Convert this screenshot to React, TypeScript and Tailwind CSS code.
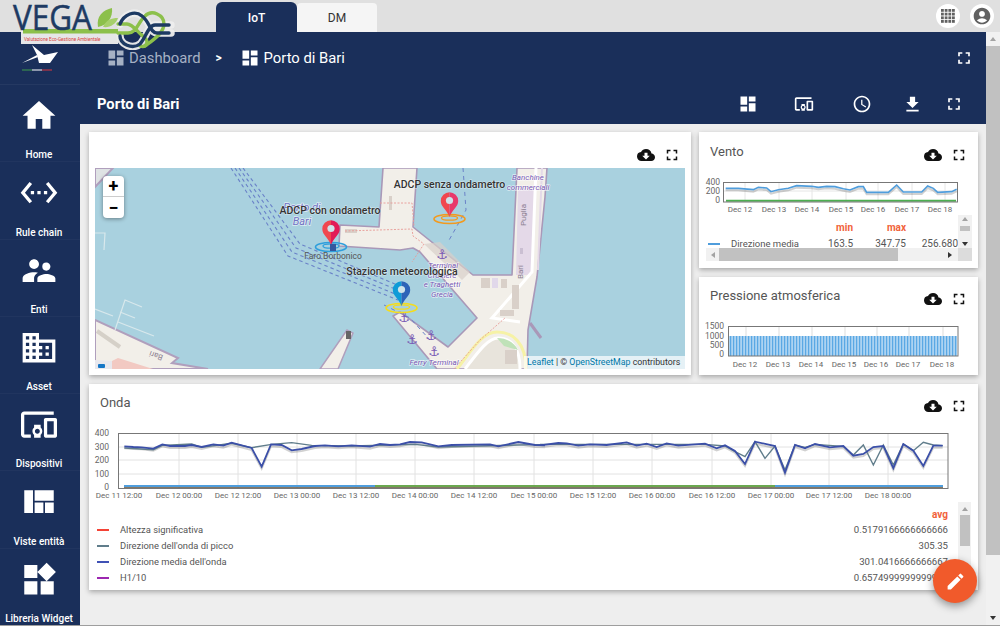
import { ReactNode } from 'react';
import {
  MdAccessTime,
  MdAccountCircle,
  MdCloudDownload,
  MdDashboard,
  MdDevicesOther,
  MdDomain,
  MdEdit,
  MdFileDownload,
  MdFullscreen,
  MdHome,
  MdSettingsEthernet,
  MdSupervisorAccount,
  MdViewQuilt,
  MdWidgets,
} from 'react-icons/md';

type Pt = [number, number];

// points read off 3x crops, so convert them back to page coordinates
const pts = (list: Pt[], ox: number, oy: number) =>
  list.map(([x, y]) => `${x / 3 + ox},${y / 3 + oy}`).join(' ');

const navItems = [
  { label: 'Home', icon: MdHome },
  { label: 'Rule chain', icon: MdSettingsEthernet },
  { label: 'Enti', icon: MdSupervisorAccount },
  { label: 'Asset', icon: MdDomain },
  { label: 'Dispositivi', icon: MdDevicesOther },
  { label: 'Viste entità', icon: MdViewQuilt },
  { label: 'Libreria Widget', icon: MdWidgets },
];

const ventoLine: Pt[] = [
  [92, 175], [130, 175], [175, 179], [190, 172], [215, 174], [228, 185], [250, 179], [280, 175], [305, 167],
  [350, 169], [370, 172], [395, 169], [420, 170], [445, 176], [465, 180], [490, 170], [505, 170], [515, 187],
  [580, 187], [605, 165], [625, 186], [680, 186], [698, 168], [715, 175], [728, 187], [770, 185], [785, 178],
];

const ondaLeft: Pt[] = [
  [118, 184], [145, 186], [170, 187], [205, 191], [232, 178], [255, 183], [300, 183], [320, 180], [350, 186],
  [385, 178], [415, 182], [440, 173], [500, 189], [530, 245], [558, 178], [590, 180], [620, 196], [650, 192],
  [690, 183], [720, 181], [760, 184], [800, 181], [855, 185], [885, 177], [915, 180], [945, 178], [975, 171],
  [1010, 172], [1060, 184], [1100, 180], [1215, 178], [1240, 184], [1300, 171], [1350, 180], [1380, 181],
];
const ondaRight: Pt[] = [
  [0, 181], [55, 174], [80, 175], [115, 182], [150, 178], [200, 180], [260, 172], [290, 182], [320, 176],
  [350, 186], [380, 175], [415, 182], [495, 176], [530, 190], [555, 181], [585, 198], [615, 237], [645, 170],
  [705, 183], [735, 263], [765, 180], [795, 190], [825, 177], [870, 187], [910, 183], [940, 212], [970, 207],
  [1000, 186], [1030, 183], [1060, 250], [1090, 177], [1120, 197], [1150, 243], [1180, 182], [1208, 182],
];
const peakLeft: Pt[] = [
  [118, 189], [205, 194], [232, 181], [320, 177], [350, 187], [440, 175], [500, 188], [560, 178], [620, 173],
  [680, 181], [800, 183], [991, 178], [1060, 186], [1380, 178],
];
const peakRight: Pt[] = [
  [0, 178], [495, 178], [555, 183], [585, 200], [615, 215], [645, 170], [675, 220], [705, 183], [735, 255],
  [765, 180], [795, 187], [825, 178], [910, 184], [940, 210], [970, 180], [1000, 240], [1030, 180], [1060, 240],
  [1090, 177], [1120, 197], [1150, 172], [1180, 180], [1208, 182],
];

const ondaTicks: [number, string][] = [
  [119, 'Dec 11 12:00'], [179, 'Dec 12 00:00'], [238, 'Dec 12 12:00'], [297, 'Dec 13 00:00'],
  [356, 'Dec 13 12:00'], [415, 'Dec 14 00:00'], [474, 'Dec 14 12:00'], [534, 'Dec 15 00:00'],
  [593, 'Dec 15 12:00'], [652, 'Dec 16 00:00'], [712, 'Dec 16 12:00'], [771, 'Dec 17 00:00'],
  [829, 'Dec 17 12:00'], [888, 'Dec 18 00:00'],
];

const ondaRows = [
  { name: 'Altezza significativa', color: '#f44336', avg: '0.5179166666666666' },
  { name: "Direzione dell'onda di picco", color: '#607d8b', avg: '305.35' },
  { name: "Direzione media dell'onda", color: '#3f51b5', avg: '301.0416666666667' },
  { name: 'H1/10', color: '#9c27b0', avg: '0.6574999999999999' },
];

function Arrow({ dir, dark }: { dir: 'up' | 'down' | 'left' | 'right'; dark?: boolean }) {
  const shape = {
    up: '1,6 4,2 7,6',
    down: '1,2 4,6 7,2',
    left: '6,1 2,4 6,7',
    right: '2,1 6,4 2,7',
  }[dir];
  return (
    <svg viewBox="0 0 8 8" className="w-2 h-2">
      <polygon points={shape} fill={dark ? '#333333' : '#a3a3a3'} />
    </svg>
  );
}

function CardActions() {
  return (
    <div className="flex gap-2 mr-[10px]">
      <MdCloudDownload className="w-[18px] h-[18px] text-[#111111]" />
      <MdFullscreen className="w-[18px] h-[18px] text-[#111111]" />
    </div>
  );
}

function Card({ title, className, children, first }: { title?: string; className?: string; children: ReactNode; first?: boolean }) {
  return (
    <div className={`bg-white shadow-[0_2px_5px_rgba(0,0,0,0.3)] flex flex-col overflow-hidden ${className ?? ''}`}>
      <div className={`flex justify-between ${first ? 'pt-[14px]' : 'pt-[13px]'}`}>
        <div className="ml-[11px] -mt-[4px] text-[13px] leading-[20px] text-[#555555]">{title}</div>
        <CardActions />
      </div>
      {children}
    </div>
  );
}

function Pin({ x, y, a, b, ring }: { x: number; y: number; a: string; b: string; ring: string }) {
  // x,y is the tip of the pin
  return (
    <g>
      <ellipse cx={x} cy={y + 2} rx={15.5} ry={4.5} fill="none" stroke={ring} strokeWidth={1.6} />
      <ellipse cx={x} cy={y + 1} rx={8} ry={2.2} fill="none" stroke={ring} strokeWidth={1.3} />
      <path d={`M${x} ${y} C${x - 3} ${y - 8} ${x - 8.7} ${y - 10} ${x - 8.7} ${y - 16} A8.7 8.7 0 0 1 ${x} ${y - 24.7} Z`} fill={a} />
      <path d={`M${x} ${y} C${x + 3} ${y - 8} ${x + 8.7} ${y - 10} ${x + 8.7} ${y - 16} A8.7 8.7 0 0 0 ${x} ${y - 24.7} Z`} fill={b} />
      <circle cx={x} cy={y - 16.5} r={3.6} fill="#cfe3ea" />
    </g>
  );
}

function MapDrawing() {
  const anchors: Pt[] = [[442, 254], [404, 317], [412, 339], [431, 335], [434, 351]];
  const label = 'font-medium fill-[#333333] [paint-order:stroke] stroke-white/50 stroke-[1px]';
  const place = 'italic fill-[#7a5bb5] [paint-order:stroke] stroke-white/60 stroke-[1.5px]';
  return (
    <svg viewBox="95 168 590 201" className="absolute inset-0 w-full h-full">
      <rect x="95" y="168" width="590" height="201" fill="#a9d1df" />
      {/* land */}
      <polygon points="95,187 113,168 95,168" fill="#dfe3e4" stroke="#b09fbd" strokeWidth="2" />
      <polygon points="95,320 178,358 172,363 208,369 95,369" fill="#f2efe9" stroke="#b09fbd" strokeWidth="2" />
      <polygon points="112,361 118,358 153,369 112,369" fill="#f2c9c2" />
      <polygon points="95,360 112,361 112,369 95,369" fill="#e8e8ee" />
      <rect x="98" y="364" width="7" height="4" rx="1" fill="#1476c6" />
      <polyline points="97,331 120,347" fill="none" stroke="#d5d0c8" strokeWidth="4" />
      <polygon points="320,369 347,330 353,333 338,369" fill="#f2efe9" stroke="#b09fbd" strokeWidth="1.5" />
      <rect x="346" y="331" width="5" height="8" fill="#666666" />
      <polygon
        points="383,168 379,227 340,225 339,246 400,250 413,248 420,252 477,318 448,347 400,312 393,316 437,369 527,369 528,330 537,277 545,197 547,168 517,168 512,275 473,275 413,227 417,168"
        fill="#f2efe9"
        stroke="#a998b8"
        strokeWidth="1.6"
        strokeLinejoin="round"
      />
      <polyline points="530,323 541,338" stroke="#a998b8" strokeWidth="3" fill="none" />
      {/* roads and lots */}
      <polygon points="518,190 535,190 532,275 516,275" fill="#e4d9e8" />
      <polyline points="536,168 532,272 492,318 520,322" fill="none" stroke="#ffffff" strokeWidth="3" />
      <polyline points="542,168 538,270" fill="none" stroke="#e4d9e8" strokeWidth="2" />
      <path d="M457 369 C472 350 482 332 497 332 C512 332 526 342 526 369" fill="none" stroke="#f6f2a6" strokeWidth="3" />
      <path d="M465 369 C478 352 488 338 498 338 C510 338 520 346 520 369" fill="#e8e4dc" stroke="#ffffff" strokeWidth="3" />
      <path d="M497 338 C506 338 514 342 518 350 L504 346 Z" fill="#bfe2b8" />
      <rect x="481" y="278" width="9" height="10" fill="#d9d0c9" />
      <rect x="492" y="278" width="6" height="10" fill="#e1d8ea" />
      <rect x="501" y="279" width="6" height="9" fill="#d9d0c9" />
      <rect x="512" y="285" width="7" height="24" fill="#d9d0c9" />
      <rect x="500" y="310" width="14" height="6" fill="#d9d0c9" />
      <polygon points="424,244 440,242 470,272 462,280" fill="#d9d0c9" opacity="0.7" />
      <rect x="345" y="229" width="12" height="4" fill="#d9d0c9" />
      <rect x="389" y="196" width="3" height="14" fill="#d9d0c9" />
      <rect x="520" y="248" width="3" height="6" fill="#cabfd2" />
      <rect x="505" y="350" width="12" height="14" fill="#d9d0c9" />
      {/* pink boundary dots */}
      <polyline points="345,231 412,229 413,236 424,244 412,262" fill="none" stroke="#e89a95" strokeWidth="0.9" strokeDasharray="2 1.5" />
      <polyline points="380,203 412,203 414,226" fill="none" stroke="#e89a95" strokeWidth="0.9" strokeDasharray="2 1.5" />
      <polyline points="454,369 480,340 505,318" fill="none" stroke="#e89a95" strokeWidth="0.9" strokeDasharray="2 1.5" />
      {/* channel marks */}
      {[0, 4, 8, 12].map((d) => (
        <polyline
          key={d}
          points={`${231 + d},168 ${288 + d},${256 - d} ${398 + d * 0.3},${300 - d * 1.1}`}
          fill="none"
          stroke="#6a82c8"
          strokeWidth="1.1"
          strokeDasharray="3.5 3"
        />
      ))}
      <polyline points="463,168 466,210 448,242" fill="none" stroke="#6a82c8" strokeWidth="1" strokeDasharray="4 4" />
      <polyline points="384,305 410,318 430,340" fill="none" stroke="#6a82c8" strokeWidth="1" strokeDasharray="4 4" />
      <g fill="none" stroke="#d8e8ec" strokeWidth="1.2">
        <polyline points="95,233 105,233 104,250" />
        <polyline points="142,307 125,300 115,330" />
        <polyline points="95,309 113,316" />
        <polyline points="120,312 135,318" />
        <polyline points="118,322 154,336" />
      </g>
      {anchors.map(([x, y]) => (
        <text key={`${x}-${y}`} x={x} y={y + 5} textAnchor="middle" className="fill-[#7a5bb5] text-[13px] font-['DejaVu_Sans']">
          ⚓
        </text>
      ))}
      {/* map names */}
      <g textAnchor="middle" className="text-[8px]">
        <text x="302" y="211" className={`${place} text-[11px] fill-[#7272c4]`}>Porto di</text>
        <text x="302" y="225" className={`${place} text-[11px] fill-[#7272c4]`}>Bari</text>
        <text x="333" y="259" className="fill-[#555555] text-[8.5px]">Faro Borbonico</text>
        <text x="528" y="180" className={place}>Banchine</text>
        <text x="528" y="190" className={place}>commerciali</text>
        <text x="523" y="215" transform="rotate(-90 523 215)" className="fill-[#8b8091] text-[8px]" dy="3">Puglia</text>
        <text x="520" y="272" transform="rotate(-90 520 272)" className="fill-[#8b8091] text-[8px]" dy="3">Bari</text>
        <text x="156" y="356" transform="rotate(200 156 356)" className="fill-[#8b8091] text-[8px]" dy="3">Bari</text>
        <text x="443" y="268" className={place}>Terminal</text>
        <text x="442" y="278" className={place}>Crociere</text>
        <text x="442" y="287" className={place}>e Traghetti</text>
        <text x="442" y="297" className={place}>Grecia</text>
        <text x="434" y="365" className={place}>Ferry Terminal</text>
      </g>
      <Pin x={331} y={245} a="#f0474f" b="#e21a57" ring="#2f9fdc" />
      <rect x="330" y="244" width="6" height="7" fill="#34589f" />
      <Pin x={449.5} y={217} a="#f0474f" b="#e8386b" ring="#f29a1f" />
      <Pin x={401.5} y={306} a="#0f9bd7" b="#2d63b8" ring="#f4dc1e" />
      <g textAnchor="middle" className="text-[10.5px]">
        <text x="330" y="214" className={label}>ADCP con ondametro</text>
        <text x="449.5" y="188" className={label}>ADCP senza ondametro</text>
        <text x="402" y="275" className={label}>Stazione meteorologica</text>
      </g>
    </svg>
  );
}

function VentoChart() {
  const ticks: [number, string][] = [[740, 'Dec 12'], [774, 'Dec 13'], [807, 'Dec 14'], [841, 'Dec 15'], [873, 'Dec 16'], [907, 'Dec 17'], [940, 'Dec 18']];
  return (
    <svg viewBox="699 175 279 40" className="w-[279px] h-10 shrink-0">
      {ticks.map(([x]) => (
        <line key={x} x1={x + 5} x2={x + 5} y1="182" y2="202" stroke="#e6e6e6" strokeWidth="1" />
      ))}
      <line x1="723" x2="958" y1="191" y2="191" stroke="#e6e6e6" />
      <polyline points={pts(ventoLine, 695, 132)} fill="none" stroke="#000000" strokeOpacity="0.18" strokeWidth="2" />
      <polyline points={pts(ventoLine, 695, 130)} fill="none" stroke="#4f9ddc" strokeWidth="1.6" />
      <line x1="726" x2="956" y1="200.7" y2="200.7" stroke="#4caf50" strokeWidth="2" />
      <rect x="723.5" y="182.5" width="234" height="19.5" fill="none" stroke="#777777" />
      <g textAnchor="end" className="text-[8.5px] fill-[#666666]">
        <text x="720" y="185">400</text>
        <text x="720" y="194">200</text>
        <text x="720" y="203">0</text>
      </g>
      <g textAnchor="middle" className="text-[8px] fill-[#666666]">
        {ticks.map(([x, t]) => (
          <text key={t} x={x} y="212">{t}</text>
        ))}
      </g>
    </svg>
  );
}

function PressioneChart() {
  const ticks: [number, string][] = [[745, 'Dec 12'], [778, 'Dec 13'], [811, 'Dec 14'], [844, 'Dec 15'], [876, 'Dec 16'], [908, 'Dec 17'], [942, 'Dec 18']];
  const bars = Array.from({ length: 76 }, (_, i) => 729.5 + i * 3);
  return (
    <svg viewBox="699 322 279 50" className="w-[279px] h-[50px] shrink-0">
      {ticks.map(([x]) => (
        <line key={x} x1={x + 1} x2={x + 1} y1="327" y2="336" stroke="#dddddd" />
      ))}
      {bars.map((x) => (
        <rect key={x} x={x} y="336" width="2.1" height="20" fill="#5aa8e4" />
      ))}
      <rect x="728.5" y="326.5" width="229.5" height="29.5" fill="none" stroke="#777777" />
      <g textAnchor="end" className="text-[8.5px] fill-[#666666]">
        <text x="724" y="329">1500</text>
        <text x="724" y="339">1000</text>
        <text x="724" y="348">500</text>
        <text x="724" y="357">0</text>
      </g>
      <g textAnchor="middle" className="text-[8px] fill-[#666666]">
        {ticks.map(([x, t]) => (
          <text key={t} x={x} y="366.5">{t}</text>
        ))}
      </g>
    </svg>
  );
}

function OndaChart() {
  const main = `${pts(ondaLeft, 85, 385)} ${pts(ondaRight, 540, 385)}`;
  const mainShadow = `${pts(ondaLeft, 85, 387)} ${pts(ondaRight, 540, 387)}`;
  const peak = `${pts(peakLeft, 85, 385)} ${pts(peakRight, 540, 385)}`;
  return (
    <svg viewBox="89 425 889 77" className="w-[889px] h-[77px] shrink-0">
      {ondaTicks.slice(1).map(([x]) => (
        <line key={x} x1={x} x2={x} y1="433" y2="488" stroke="#e2e2e2" />
      ))}
      {[447, 460, 474].map((y) => (
        <line key={y} x1="118" x2="948" y1={y} y2={y} stroke="#e2e2e2" />
      ))}
      <polyline points={mainShadow} fill="none" stroke="#000000" strokeOpacity="0.18" strokeWidth="2" />
      <polyline points={peak} fill="none" stroke="#607d8b" strokeWidth="1.4" />
      <polyline points={main} fill="none" stroke="#3b4fa8" strokeWidth="1.8" />
      <line x1="124" x2="943" y1="486" y2="486" stroke="#6aa84f" strokeWidth="2" />
      <line x1="124" x2="375" y1="486" y2="486" stroke="#4f9ddc" strokeWidth="1.8" />
      <line x1="775" x2="943" y1="486" y2="486" stroke="#4f9ddc" strokeWidth="1.8" />
      <line x1="124" x2="943" y1="488" y2="488" stroke="#5d4a2f" strokeWidth="1.5" />
      <rect x="118.5" y="433.5" width="829.5" height="55" fill="none" stroke="#777777" />
      <g textAnchor="end" className="text-[8.5px] fill-[#666666]">
        <text x="109" y="436">400</text>
        <text x="109" y="450">300</text>
        <text x="109" y="463">200</text>
        <text x="109" y="477">100</text>
        <text x="109" y="490">0</text>
      </g>
      <g textAnchor="middle" className="text-[8px] fill-[#666666]">
        {ondaTicks.map(([x, t]) => (
          <text key={t} x={x} y="498">{t}</text>
        ))}
      </g>
    </svg>
  );
}

function Logo() {
  return (
    <svg viewBox="0 0 180 50" className="absolute left-0 top-0 w-[180px] h-[50px]">
      <rect x="21" y="29" width="97" height="15" fill="#f0f0f0" opacity="0.95" />
      <rect x="23" y="29" width="95" height="4.5" fill="#8cc04b" />
      <text x="24" y="40.5" className="text-[4.6px] fill-[#d9453d]">Valutazione Eco-Gestione Ambientale</text>
      <text x="13" y="29.5" textLength="79" lengthAdjust="spacingAndGlyphs" className="text-[34px] fill-[#1d3a63] font-['Open_Sans'] [paint-order:stroke] stroke-[#1d3a63] stroke-[0.5px]">VEGA</text>
      <path d="M98 27 C96 16 103 10 112 8 C113 17 108 25 98 27 Z" fill="#8cc04b" />
      <path d="M103 27 C106 20 111 18 118 18 C116 24 110 28 103 27 Z" fill="#a6cf6a" />
      <g fill="none" strokeLinecap="round">
        <g stroke="#eeeeee" strokeWidth="7.5" opacity="0.95">
          <path d="M120 24 C124 14 135 10 142 16 C150 22 150 33 157 33 H171" />
          <path d="M171 25 H155 C148 25 146 38 140 44 C132 50 120 44 120 36" />
        </g>
        <path d="M118 33 H128 C137 33 138 22 145 16 C152 9 164 15 164 24 C164 34 150 42 145 46" stroke="#8cc04b" strokeWidth="3.4" />
        <path d="M118 24 H127 C133 24 137 32 144 37 C150 42 146 48 140 46" stroke="#8cc04b" strokeWidth="3.4" />
        <path d="M120 24 C124 14 135 10 142 16 C150 22 150 33 157 33 H169" stroke="#1d3a63" strokeWidth="3.4" />
        <path d="M169 25 H155 C148 25 146 38 140 44 C132 50 120 44 120 36" stroke="#1d3a63" strokeWidth="3.4" />
      </g>
    </svg>
  );
}

export default function App() {
  return (
    <div className="relative w-[1000px] h-[644px] overflow-hidden bg-white flex flex-col font-[Roboto,sans-serif]">
      {/* top bar */}
      <div className="h-8 shrink-0 bg-[#e0e0e0] flex items-end pl-[216px] pr-[7px]">
        <div className="w-[81px] h-[30px] pt-px bg-[#1a2f5a] rounded-t-md text-white text-xs font-medium flex items-center justify-center">IoT</div>
        <div className="w-20 h-[29px] bg-[#f5f5f5] rounded-t-sm text-[#333333] text-xs flex items-center justify-center">DM</div>
        <div className="ml-auto self-center flex gap-[10px] mr-[-1px]">
          <div className="w-6 h-6 rounded-full bg-white flex items-center justify-center">
            <svg viewBox="0 0 14 14" className="w-[14px] h-[14px]" fill="#616161">
              {[0, 3.7, 7.4, 11].map((x) =>
                [0, 3.7, 7.4, 11].map((y) => <rect key={`${x}-${y}`} x={x} y={y} width="2.8" height="2.8" />),
              )}
            </svg>
          </div>
          <div className="w-6 h-6 rounded-full bg-white flex items-center justify-center">
            <MdAccountCircle className="w-5 h-5 text-[#616161]" />
          </div>
        </div>
      </div>

      <div className="h-[594px] shrink-0 flex border-b border-[#9e9e9e]">
        {/* sidebar */}
        <aside className="w-20 shrink-0 bg-[#1a2f5a] flex flex-col text-white overflow-hidden">
          <div className="h-[53px] shrink-0 pt-[13px] pl-[22px] border-b border-white/5">
            <svg viewBox="0 0 36 26" className="w-9 h-[26px]">
              <polygon points="10,0 22,10 36,7 28,18 17,18 15,10" fill="#ffffff" />
              <polygon points="0,18 15,10 16,12" fill="#ffffff" />
              <rect x="0" y="24.5" width="10" height="1" fill="#3f9c4a" />
              <rect x="10" y="24.5" width="10" height="1" fill="#ffffff" />
              <rect x="20" y="24.5" width="10" height="1" fill="#d9363e" />
            </svg>
          </div>
          {navItems.map(({ label, icon: Icon }) => (
            <div key={label} className="h-[77.3px] shrink-0 flex flex-col items-center pt-[11px] pr-[2px] border-b border-white/[0.03]">
              <Icon className="w-10 h-10 text-white" />
              <div className="mt-[14px] text-[10px] leading-3 font-medium whitespace-nowrap">{label}</div>
            </div>
          ))}
        </aside>

        {/* main */}
        <main className="w-[906px] shrink-0 flex flex-col bg-[#eeeeee]">
          <div className="h-[92px] shrink-0 bg-[#1a2f5a] text-white flex flex-col">
            <div className="h-[52px] flex items-center pl-[25.5px] pr-[12px]">
              <MdDashboard className="w-5 h-5 text-[#a6b1c4]" />
              <span className="ml-[3.5px] text-[14.8px] text-[#a6b1c4]">Dashboard</span>
              <span className="ml-[15px] w-[8px] text-xs font-bold">&gt;</span>
              <MdDashboard className="ml-[16.5px] w-5 h-5" />
              <span className="ml-[3.5px] text-[14.8px]">Porto di Bari</span>
              <MdFullscreen className="ml-auto w-5 h-5" />
            </div>
            <div className="flex-1 flex items-center pl-[17px]">
              <span className="text-[14.7px] font-bold">Porto di Bari</span>
              <div className="ml-auto flex items-center">
                <MdDashboard className="w-5 h-5" />
                <MdDevicesOther className="ml-[36px] w-5 h-5" />
                <MdAccessTime className="ml-[38px] w-5 h-5" />
                <MdFileDownload className="ml-[30px] w-[21px] h-[21px]" />
                <MdFullscreen className="ml-[21px] mr-[22px] w-5 h-5" />
              </div>
            </div>
          </div>

          <div className="flex-1 pl-[9px] pt-2 grid grid-cols-[602px_279px] grid-rows-[136px_98px_206px] gap-x-2 gap-y-[9px] content-start">
            {/* map */}
            <Card first className="row-span-2">
              <div className="h-[4px]" />
              <div className="relative mx-[6px] w-[590px] h-[201px] overflow-hidden">
                <MapDrawing />
                <div className="absolute left-2 top-2 w-[21px] rounded-sm bg-white shadow-[0_1px_4px_rgba(0,0,0,0.4)] text-black font-bold flex flex-col">
                  <div className="h-[21px] flex items-center justify-center text-lg leading-none border-b border-[#cccccc]">+</div>
                  <div className="h-[21px] flex items-center justify-center text-lg leading-none">−</div>
                </div>
                <div className="absolute right-0 bottom-0 h-[13px] w-[161px] pl-[3px] bg-white/70 text-[8.8px] leading-[13px] text-[#333333] whitespace-nowrap">
                  <span className="text-[#0078a8]">Leaflet</span> | © <span className="text-[#0078a8]">OpenStreetMap</span> contributors
                </div>
              </div>
            </Card>

            {/* vento */}
            <Card first title="Vento">
              <div className="h-[11px]" />
              <VentoChart />
              <div className="mx-[7px] w-[266px] h-[46px] flex flex-col text-[10px] text-[#555555]">
                <div className="h-[33px] flex">
                  <div className="w-[252px] overflow-hidden pt-[5px]">
                    <div className="grid grid-cols-[25px_97px_25px_53px_52px] leading-4">
                      <div />
                      <div />
                      <div className="text-right font-bold text-[#f1623a]">min</div>
                      <div className="text-right font-bold text-[#f1623a]">max</div>
                      <div />
                      <div className="flex items-center"><div className="w-3 h-0.5 bg-[#4f9ddc] ml-[2px]" /></div>
                      <div className="whitespace-nowrap text-[9.5px]">Direzione media</div>
                      <div className="text-right">163.5</div>
                      <div className="text-right">347.75</div>
                      <div className="text-right">256.680</div>
                    </div>
                  </div>
                  <div className="w-[14px] bg-[#f1f1f1] flex flex-col items-center">
                    <Arrow dir="up" />
                    <div className="mt-[3px] w-[10px] h-[5px] bg-[#c1c1c1]" />
                    <div className="mt-auto"><Arrow dir="down" dark /></div>
                  </div>
                </div>
                <div className="h-[13px] flex bg-[#f1f1f1] items-center">
                  <div className="w-[13px] flex justify-center"><Arrow dir="left" /></div>
                  <div className="w-[179px] h-full bg-[#c1c1c1]" />
                  <div className="ml-auto w-[46px] flex justify-end pr-[4px]"><Arrow dir="right" dark /></div>
                  <div className="w-[14px] h-full bg-[#dcdcdc]" />
                </div>
              </div>
            </Card>

            {/* pressione */}
            <Card title="Pressione atmosferica" className="col-start-2">
              <div className="h-[14px]" />
              <PressioneChart />
            </Card>

            {/* onda */}
            <Card title="Onda" className="col-span-2">
              <div className="h-[10px]" />
              <OndaChart />
              <div className="h-[88px] flex text-[9.6px] text-[#555555]">
                <div className="w-[869px] pl-2 pr-[10px] pt-[5px]">
                  <div className="h-[15px] leading-4 text-right font-bold text-[10px] text-[#f1623a]">avg</div>
                  {ondaRows.map((r) => (
                    <div key={r.name} className="h-4 flex items-center">
                      <div className="w-3 h-0.5" style={{ backgroundColor: r.color }} />
                      <div className="ml-[11px] whitespace-nowrap text-[9.4px]">{r.name}</div>
                      <div className="ml-auto">{r.avg}</div>
                    </div>
                  ))}
                </div>
                <div className="w-[13px] bg-[#f1f1f1] flex flex-col items-center">
                  <div className="h-[13px] flex items-center"><Arrow dir="up" /></div>
                  <div className="w-[10px] h-[31px] bg-[#c1c1c1]" />
                </div>
              </div>
            </Card>
          </div>
        </main>

        {/* page scrollbar */}
        <div className="w-[14px] shrink-0 bg-[#f1f1f1] flex flex-col items-center">
          <div className="h-[14px] flex items-center"><Arrow dir="up" /></div>
          <div className="w-full h-[509px] bg-[#c1c1c1]" />
          <div className="mt-auto h-[14px] flex items-center"><Arrow dir="down" dark /></div>
        </div>
      </div>

      {/* floating pieces */}
      <div className="absolute left-0 top-0">
        <Logo />
      </div>
      <button className="absolute left-[933px] top-[559px] w-11 h-11 rounded-full bg-[#f15a2b] shadow-[0_3px_8px_rgba(0,0,0,0.4)] flex items-center justify-center">
        <MdEdit className="w-[21px] h-[21px] text-white" />
      </button>
    </div>
  );
}
